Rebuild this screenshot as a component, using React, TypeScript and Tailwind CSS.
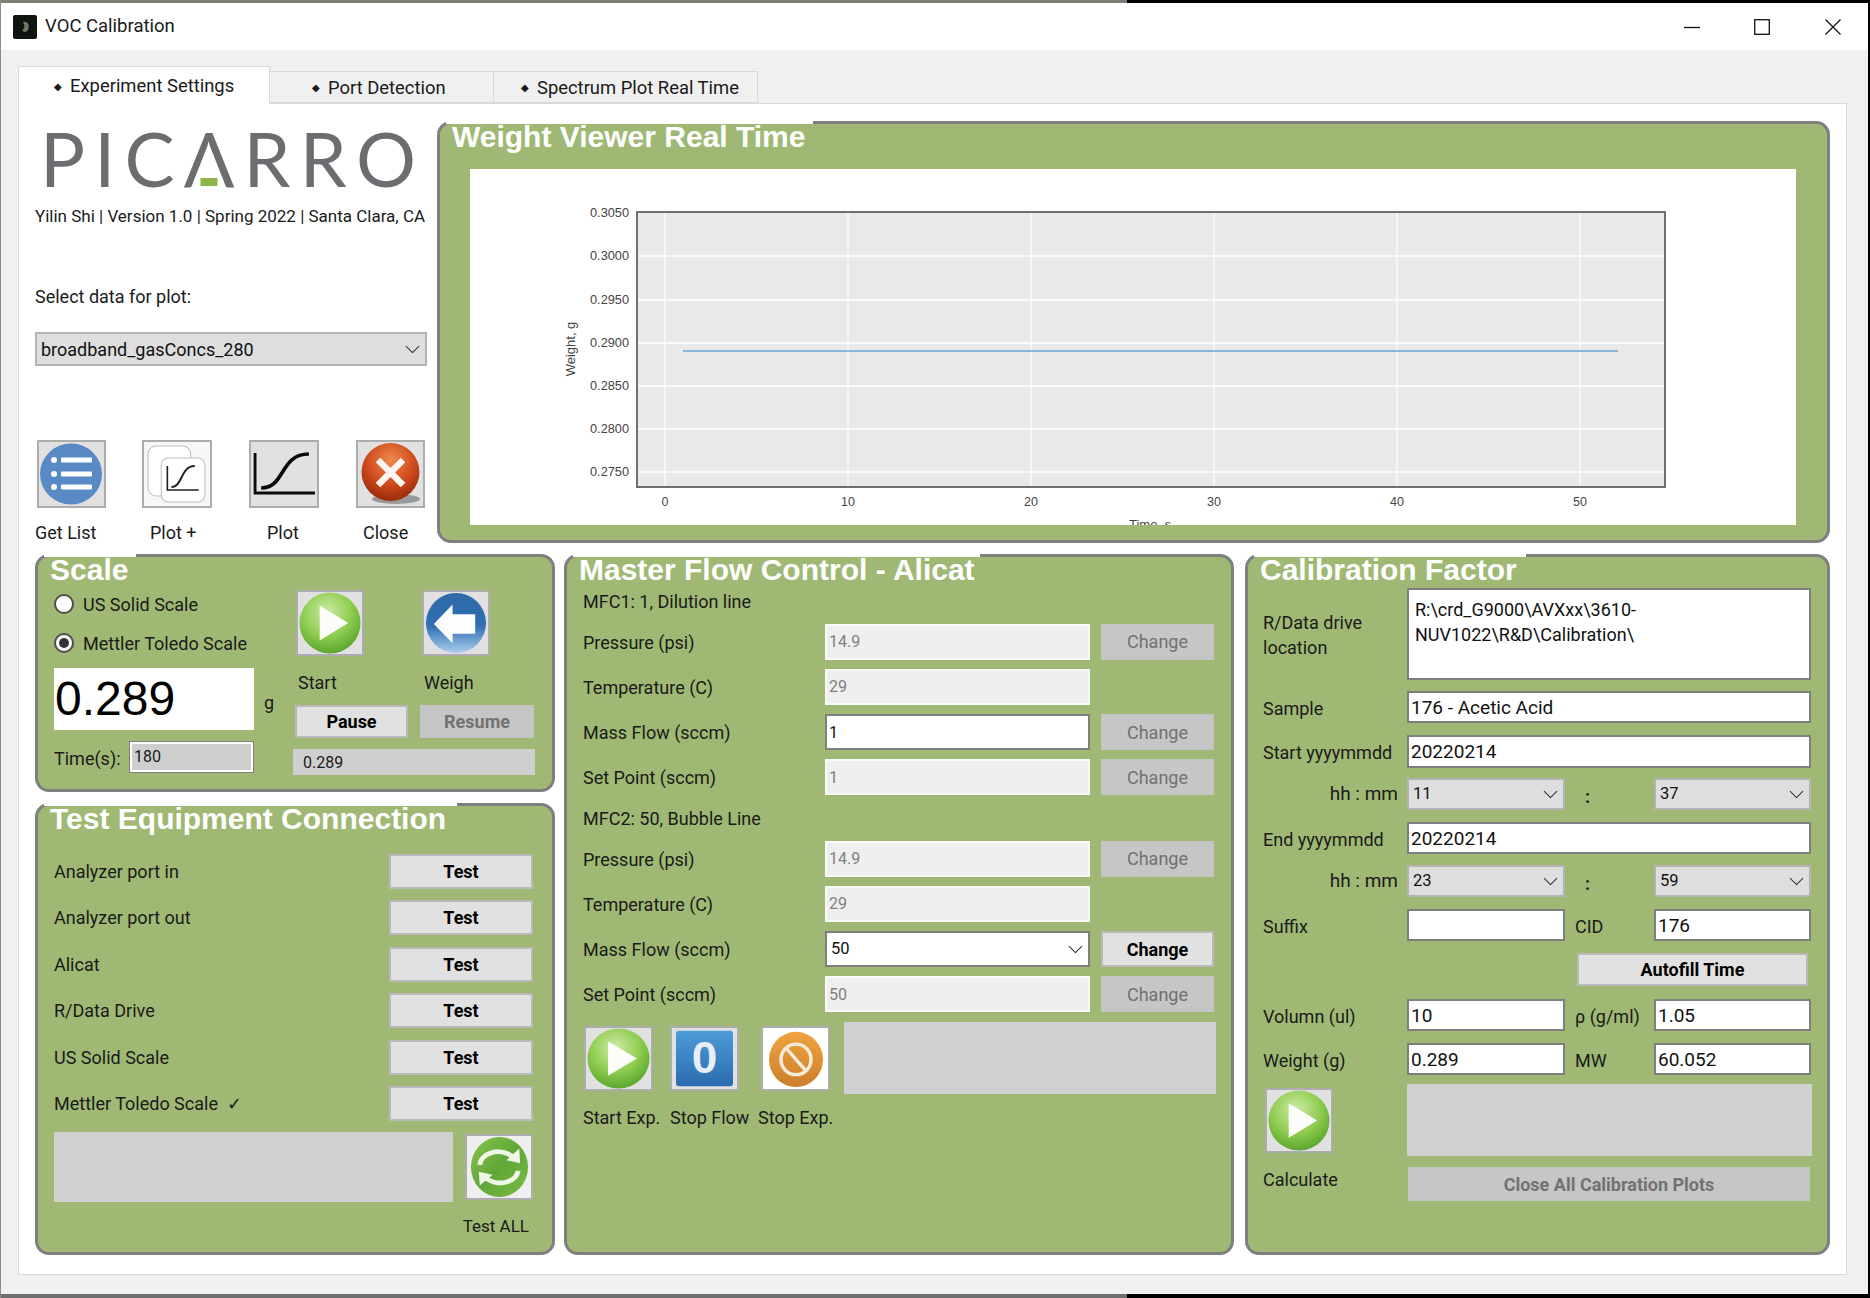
import React from "react";
import { ChevronDown } from "lucide-react";

const GroupBox = ({ title, titleW, className, children }: { title: string; titleW: string; className: string; children: React.ReactNode }) => (
  <section className={`relative rounded-[14px] border-[3px] border-[#7f7f7f] bg-[#9fb974] ${className}`}>
    <div className={`absolute -top-[3px] left-[6px] h-[3px] bg-white ${titleW}`} />
    <h2 className="absolute -top-[5px] left-[12px] whitespace-nowrap font-['Liberation_Sans'] text-[30px] font-bold leading-[36px] text-white">{title}</h2>
    {children}
  </section>
);

const IconBtn = ({ children, className = "bg-[#e1e1e1]" }: { children: React.ReactNode; className?: string }) => (
  <button className={`block h-full w-full border-2 border-[#adadad] p-0 ${className}`}>{children}</button>
);

const Svg = ({ children }: { children: React.ReactNode }) => (
  <svg viewBox="0 0 65 64" preserveAspectRatio="none" className="block h-full w-full">{children}</svg>
);

const PlayIcon = () => (
  <Svg>
    <defs>
      <radialGradient id="gp" cx="45%" cy="32%" r="72%">
        <stop offset="0%" stopColor="#cdeaa6" />
        <stop offset="55%" stopColor="#8fcd50" />
        <stop offset="100%" stopColor="#55a12a" />
      </radialGradient>
    </defs>
    <ellipse cx="32.5" cy="32" rx="31" ry="31.5" fill="url(#gp)" />
    <path d="M22 14 L51 32 L22 50 Z" fill="#fcfdf9" />
  </Svg>
);

const ListIcon = () => (
  <Svg>
    <ellipse cx="32" cy="32" rx="31" ry="30.5" fill="#5a8ac6" />
    {[18, 32, 45].map((y) => (
      <g key={y} fill="#fff">
        <circle cx="15" cy={y} r="3" />
        <rect x="22" y={y - 2.5} width="31" height="5" rx="1" />
      </g>
    ))}
  </Svg>
);

const PlotPlusIcon = () => (
  <Svg>
    <rect x="4" y="4" width="42" height="50" rx="8" fill="#fff" stroke="#bdbdbd" />
    <rect x="17" y="16" width="43" height="44" rx="7" fill="#fff" stroke="#bdbdbd" />
    <path d="M23 24 V48 H54" fill="none" stroke="#222" strokeWidth="1.6" />
    <path d="M27 45 C38 45 36 24 50 24" fill="none" stroke="#222" strokeWidth="2" />
  </Svg>
);

const PlotIcon = () => (
  <Svg>
    <path d="M4 11 V51 H63" fill="none" stroke="#0a0a0a" strokeWidth="2.8" />
    <path d="M10 46 C34 46 28 12 57 12" fill="none" stroke="#0a0a0a" strokeWidth="3.6" />
  </Svg>
);

const CloseIcon = () => (
  <Svg>
    <defs>
      <radialGradient id="rd" cx="50%" cy="30%" r="75%">
        <stop offset="0%" stopColor="#ee8a4c" />
        <stop offset="55%" stopColor="#cf4a1c" />
        <stop offset="100%" stopColor="#8f2508" />
      </radialGradient>
    </defs>
    <ellipse cx="38" cy="57" rx="24" ry="5" fill="#9a9a9a" />
    <ellipse cx="32.5" cy="30" rx="29" ry="29" fill="url(#rd)" />
    <path d="M20 18 L45 43 M45 18 L20 43" stroke="#fdf6f0" strokeWidth="6.5" />
  </Svg>
);

const ArrowIcon = () => (
  <Svg>
    <defs>
      <linearGradient id="bl" x1="0" y1="0" x2="0" y2="1">
        <stop offset="0%" stopColor="#2f69a8" />
        <stop offset="55%" stopColor="#2f6fb2" />
        <stop offset="100%" stopColor="#a9cdee" />
      </linearGradient>
    </defs>
    <ellipse cx="32.5" cy="32" rx="30.5" ry="31" fill="url(#bl)" />
    <path d="M10 33 L29 13 V23 H52 V43 H29 V53 Z" fill="#fdfdfd" />
  </Svg>
);

const RefreshIcon = () => (
  <Svg>
    <defs>
      <linearGradient id="rf" x1="0" y1="0" x2="1" y2="1">
        <stop offset="0%" stopColor="#8bc34f" />
        <stop offset="50%" stopColor="#5fa738" />
        <stop offset="100%" stopColor="#7cbc45" />
      </linearGradient>
    </defs>
    <ellipse cx="33" cy="32" rx="29" ry="31" fill="url(#rf)" />
    <path d="M13 30 C14 18 32 11 46 21" fill="none" stroke="#eef6e6" strokeWidth="5" />
    <path d="M53 13 L54 28 L40 25 Z" fill="#eef6e6" />
    <path d="M52 36 C50 47 33 53 20 44" fill="none" stroke="#eef6e6" strokeWidth="5" />
    <path d="M13 51 L12 37 L26 40 Z" fill="#eef6e6" />
  </Svg>
);

const ZeroIcon = () => (
  <Svg>
    <defs>
      <linearGradient id="bz" x1="0" y1="0" x2="0" y2="1">
        <stop offset="0%" stopColor="#4d9bd6" />
        <stop offset="100%" stopColor="#2a6cb0" />
      </linearGradient>
    </defs>
    <rect x="4" y="3" width="57" height="58" rx="3" fill="url(#bz)" />
    <text x="32.5" y="47" textAnchor="middle" fontFamily="Liberation Sans" fontWeight="700" fontSize="46" fill="#e9eef5">0</text>
  </Svg>
);

const BanIcon = () => (
  <Svg>
    <defs>
      <linearGradient id="or" x1="0" y1="0" x2="0" y2="1">
        <stop offset="0%" stopColor="#efa33f" />
        <stop offset="100%" stopColor="#cc7f2c" />
      </linearGradient>
    </defs>
    <ellipse cx="33" cy="33" rx="27" ry="29" fill="url(#or)" />
    <ellipse cx="33" cy="33" rx="15" ry="16" fill="none" stroke="#f6ead9" strokeWidth="3.5" />
    <path d="M23 21 L43 45" stroke="#f6ead9" strokeWidth="3.5" />
  </Svg>
);

const Input = ({ value = "", big = false, disabled = false }: { value?: string; big?: boolean; disabled?: boolean }) => (
  <input
    readOnly
    value={value}
    className={`h-full w-full min-w-0 border-2 px-[2px] outline-none ${big ? "text-[19px]" : "text-[16px]"} ${disabled ? "border-[#f9f9f9] bg-[#efefef] text-[#808080] outline outline-1 outline-[#cfcfcf]" : "border-[#7f7f7f] bg-white text-[#111]"}`}
  />
);

const Select = ({ value, big = false, light = false }: { value: string; big?: boolean; light?: boolean }) => (
  <div className={`flex h-full items-center justify-between border-2 pl-[4px] pr-0 ${big ? "text-[18px]" : "text-[16.5px]"} text-[#111] ${light ? "border-[#7f7f7f] bg-white" : "border-[#b4b4b4] bg-[#dedede]"}`}>
    <span>{value}</span>
    <ChevronDown size={25} strokeWidth={1} className="text-[#333]" />
  </div>
);

const Btn = ({ children, disabled = false, strong = false, className = "" }: { children: React.ReactNode; disabled?: boolean; strong?: boolean; className?: string }) => (
  <button className={`flex items-center justify-center border-2 text-[18px] ${strong || !disabled ? "font-bold" : "font-normal"} ${disabled ? "border-[#c4c4c4] bg-[#c6c6c6] text-[#727272]" : "border-[#b9b9b9] bg-[#e1e1e1] text-black"} ${className}`}>{children}</button>
);

const Radio = ({ label, checked = false }: { label: string; checked?: boolean }) => (
  <label className="flex h-[39px] items-center gap-[9px]">
    <span className="flex h-[20px] w-[20px] items-center justify-center rounded-full border-2 border-[#4d4d4d] bg-white">
      {checked && <span className="h-[10px] w-[10px] rounded-full bg-[#333]" />}
    </span>
    <span className="pt-[2px]">{label}</span>
  </label>
);

const FlowRow = ({ label, value, disabled = true, change, changeOn = false, select = false }: { label: string; value: string; disabled?: boolean; change?: boolean; changeOn?: boolean; select?: boolean }) => (
  <div className="flex h-[45.25px] items-center">
    <span className="w-[242px] pt-[1px]">{label}</span>
    <div className="h-[36px] w-[265px]">
      {select ? <Select value={value} light /> : <Input value={value} disabled={disabled} />}
    </div>
    {change && <Btn disabled={!changeOn} className="ml-[11px] h-[36px] w-[113px]">Change</Btn>}
  </div>
);

const CalRow = ({ label, className, children }: { label: string; className: string; children: React.ReactNode }) => (
  <div className={`flex items-center ${className}`}>
    <span className="w-[144px] whitespace-nowrap pt-[2px]">{label}</span>
    <div className="h-full w-[404px]">{children}</div>
  </div>
);

const CalPair = ({ label, second, left, right, className, indent = false }: { label: string; second: string; left: React.ReactNode; right: React.ReactNode; className: string; indent?: boolean }) => (
  <div className={`flex items-center ${className}`}>
    <span className={`w-[144px] whitespace-nowrap ${indent ? "pr-[9px] text-right text-[19px]" : "pt-[2px]"}`}>{label}</span>
    <div className="h-full w-[158px]">{left}</div>
    <span className={`w-[89px] whitespace-nowrap ${indent ? "pl-[20px] pt-[4px] font-bold" : "pl-[10px] pt-[2px]"}`}>{second}</span>
    <div className="h-full w-[157px]">{right}</div>
  </div>
);

const Chart = () => {
  const ys = [
    ["0.3050", 214],
    ["0.3000", 257],
    ["0.2950", 301],
    ["0.2900", 344],
    ["0.2850", 387],
    ["0.2800", 430],
    ["0.2750", 473],
  ] as const;
  const xs = [
    ["0", 665],
    ["10", 848],
    ["20", 1031],
    ["30", 1214],
    ["40", 1397],
    ["50", 1580],
  ] as const;
  return (
    <svg viewBox="470 170 1326 356" className="block h-[356px] w-[1326px] bg-white" fontFamily="Liberation Sans" fontSize="12.5" fill="#444">
      <rect x="637" y="213" width="1028" height="275" fill="#e9e9e9" stroke="#6f6f6f" strokeWidth="2" />
      {ys.slice(1).map(([, y]) => <line key={y} x1="638" x2="1664" y1={y} y2={y} stroke="#fff" strokeWidth="1.5" />)}
      {xs.map(([, x]) => <line key={x} x1={x} x2={x} y1="214" y2="487" stroke="#fff" strokeWidth="1.2" />)}
      {ys.map(([t, y]) => <text key={t} x="629" y={y + 4} textAnchor="end" textLength="39" lengthAdjust="spacingAndGlyphs">{t}</text>)}
      {xs.map(([t, x]) => <text key={t} x={x} y="507" textAnchor="middle">{t}</text>)}
      <line x1="683" x2="1618" y1="352" y2="352" stroke="#6ba3d0" strokeWidth="1.6" />
      <text transform="translate(575 350) rotate(-90)" textAnchor="middle" fontSize="13">Weight, g</text>
      <text x="1129" y="530" fontSize="13">Time, s</text>
    </svg>
  );
};

export default function App() {
  return (
    <div className="relative h-[1298px] w-[1870px] overflow-hidden bg-black font-['Roboto',sans-serif] text-[18px] text-[#1a1a1a]">
      <div className="h-[3px] w-[1127px] bg-[#7d7d72]" />
      <div className="absolute bottom-0 left-0 h-[4px] w-[1127px] bg-[#6f6f6f]" />
      <div className="absolute left-0 top-0 h-full w-[1px] bg-[#8b8b8b]" />
      <main className="ml-[1px] flex h-[1291px] w-[1867px] flex-col bg-[#f0f0f0]">
        <header className="flex h-[47px] shrink-0 items-center bg-white pl-[12px]">
          <svg viewBox="0 0 24 24" className="h-[24px] w-[24px]">
            <rect width="24" height="24" rx="2" fill="#101410" />
            <path d="M10 7 C15 6 17 10 15 15 C13 18 10 17 9 15 C12 14 12 10 10 7Z" fill="#6d7a63" />
          </svg>
          <span className="ml-[8px] text-[18.5px]">VOC Calibration</span>
          <div className="ml-auto flex items-center pr-[27px]">
            <svg width="16" height="16" viewBox="0 0 16 16" className="mr-[54px]"><path d="M0 8.5H16" stroke="#111" strokeWidth="1.3" /></svg>
            <svg width="16" height="16" viewBox="0 0 16 16" className="mr-[55px]"><rect x="0.7" y="0.7" width="14.6" height="14.6" fill="none" stroke="#111" strokeWidth="1.3" /></svg>
            <svg width="16" height="16" viewBox="0 0 16 16"><path d="M0.5 0.5L15.5 15.5M15.5 0.5L0.5 15.5" stroke="#111" strokeWidth="1.3" /></svg>
          </div>
        </header>

        <nav className="flex h-[53px] shrink-0 items-end pl-[17px] text-[18.4px]">
          <div className="relative z-10 -mb-[1px] flex h-[38px] w-[252px] items-center gap-[8px] border border-b-0 border-[#d9d9d9] bg-white pl-[35px] pt-[1px]"><span className="text-[10px]">◆</span>Experiment Settings</div>
          <div className="flex h-[32px] w-[224px] items-center gap-[8px] border border-l-0 border-[#d9d9d9] bg-[#f0f0f0] pl-[42px] pt-[1px]"><span className="text-[10px]">◆</span>Port Detection</div>
          <div className="flex h-[32px] w-[264px] items-center gap-[8px] border border-l-0 border-[#d9d9d9] bg-[#f0f0f0] pl-[27px] pt-[1px]"><span className="text-[10px]">◆</span>Spectrum Plot Real Time</div>
        </nav>

        <div className="ml-[17px] h-[1172px] w-[1829px] border border-[#d9d9d9] bg-white pl-[16px] pt-[17px]">
          <div className="flex h-[422px]">
            <div className="w-[402px]">
              <div className="ml-[5px] mt-[9px] flex h-[56px] w-[376px] justify-between font-['Lato'] text-[75px] font-normal leading-[56px] text-[#6b6d70]">
                <span>P</span><span>I</span><span>C</span>
                <span className="relative">
                  Λ
                  <span className="absolute bottom-0 left-1/2 h-[8px] w-[17px] -translate-x-1/2 bg-[#8db548]" />
                </span>
                <span>R</span><span>R</span><span>O</span>
              </div>
              <p className="mt-[18px] h-[24px] whitespace-nowrap text-[17px] leading-[24px]">Yilin Shi | Version 1.0 | Spring 2022 | Santa Clara, CA</p>
              <p className="mt-[57px] h-[24px] leading-[24px]">Select data for plot:</p>
              <div className="mt-[23px] h-[34px] w-[392px]"><Select value="broadband_gasConcs_280" big /></div>
              <div className="ml-[2px] mt-[74px] flex">
                <div className="w-[69px]"><div className="h-[68px]"><IconBtn><ListIcon /></IconBtn></div><p className="-ml-[2px] mt-[13px] whitespace-nowrap leading-[24px]">Get List</p></div>
                <div className="ml-[36px] w-[70px]"><div className="h-[68px]"><IconBtn className="bg-[#f7f7f7]"><PlotPlusIcon /></IconBtn></div><p className="ml-[8px] mt-[13px] whitespace-nowrap leading-[24px]">Plot +</p></div>
                <div className="ml-[37px] w-[70px]"><div className="h-[68px]"><IconBtn><PlotIcon /></IconBtn></div><p className="ml-[18px] mt-[13px] whitespace-nowrap leading-[24px]">Plot</p></div>
                <div className="ml-[37px] w-[69px]"><div className="h-[68px]"><IconBtn><CloseIcon /></IconBtn></div><p className="ml-[7px] mt-[13px] whitespace-nowrap leading-[24px]">Close</p></div>
              </div>
            </div>
            <GroupBox title="Weight Viewer Real Time" titleW="w-[367px]" className="h-[422px] w-[1393px] pl-[30px] pt-[45px]">
              <Chart />
            </GroupBox>
          </div>

          <div className="mt-[11px] flex h-[701px]">
            <div className="w-[520px]">
              <GroupBox title="Scale" titleW="w-[92px]" className="flex h-[238px] pl-[16px]">
                <div className="w-[239px] pt-[27px]">
                  <Radio label="US Solid Scale" />
                  <Radio label="Mettler Toledo Scale" checked />
                  <div className="mt-[6px] flex h-[62px] items-center">
                    <div className="flex h-full w-[200px] items-center bg-white pl-[1px] font-['Liberation_Sans'] text-[48px] leading-none text-black">0.289</div>
                    <span className="ml-[10px] mt-[6px]">g</span>
                  </div>
                  <div className="mt-[11px] flex h-[32px] items-center">
                    <span className="w-[75px] pt-[2px]">Time(s):</span>
                    <div className="h-full w-[125px] border border-[#7f7f7f]"><div className="flex h-full items-center border-2 border-white bg-[#cfcfcf] pl-[2px] text-[16px]">180</div></div>
                  </div>
                </div>
                <div className="w-[242px] pt-[33px]">
                  <div className="ml-[3px] flex h-[66px] gap-[58px]">
                    <div className="w-[68px]"><IconBtn><PlayIcon /></IconBtn></div>
                    <div className="w-[68px]"><IconBtn><ArrowIcon /></IconBtn></div>
                  </div>
                  <div className="ml-[5px] mt-[14px] flex h-[24px] items-center">
                    <span className="w-[126px]">Start</span>
                    <span>Weigh</span>
                  </div>
                  <div className="ml-[2px] mt-[11px] flex h-[33px] gap-[12px]">
                    <Btn className="w-[113px]">Pause</Btn>
                    <Btn disabled strong className="w-[114px]">Resume</Btn>
                  </div>
                  <div className="mt-[11px] flex h-[26px] items-center bg-[#cfcfcf] pl-[10px] pt-[1px] text-[16px]">0.289</div>
                </div>
              </GroupBox>
              <GroupBox title="Test Equipment Connection" titleW="w-[413px]" className="mt-[11px] h-[452px] pl-[16px] pr-[19px] pt-[42px]">
                {["Analyzer port in", "Analyzer port out", "Alicat", "R/Data Drive", "US Solid Scale", "Mettler Toledo Scale  ✓"].map((t) => (
                  <div key={t} className="flex h-[46.5px] items-center justify-between">
                    <span className="whitespace-pre">{t}</span>
                    <Btn className="h-[35px] w-[144px]">Test</Btn>
                  </div>
                ))}
                <div className="mt-[5px] flex justify-between">
                  <div className="h-[70px] w-[399px] bg-[#d0d0d0]" />
                  <div className="mt-[2px] h-[66px] w-[68px]"><IconBtn className="bg-[#efefef]"><RefreshIcon /></IconBtn></div>
                </div>
                <p className="mt-[12px] pr-[4px] text-right text-[17px] leading-[24px]">Test ALL</p>
              </GroupBox>
            </div>

            <GroupBox title="Master Flow Control - Alicat" titleW="w-[407px]" className="ml-[9px] h-[701px] w-[670px] pl-[16px] pt-[27px]">
              <p className="flex h-[35px] items-center">MFC1: 1, Dilution line</p>
              <FlowRow label="Pressure (psi)" value="14.9" change />
              <FlowRow label="Temperature (C)" value="29" />
              <FlowRow label="Mass Flow (sccm)" value="1" disabled={false} change />
              <FlowRow label="Set Point (sccm)" value="1" change />
              <p className="flex h-[36px] items-center pt-[1px]">MFC2: 50, Bubble Line</p>
              <FlowRow label="Pressure (psi)" value="14.9" change />
              <FlowRow label="Temperature (C)" value="29" />
              <FlowRow label="Mass Flow (sccm)" value="50" select change changeOn />
              <FlowRow label="Set Point (sccm)" value="50" change />
              <div className="mt-[5px] flex h-[72px]">
                <div className="ml-[1px] mt-[4px] h-[65px] w-[69px]"><IconBtn><PlayIcon /></IconBtn></div>
                <div className="ml-[17px] mt-[4px] h-[65px] w-[69px]"><IconBtn><ZeroIcon /></IconBtn></div>
                <div className="ml-[22px] mt-[4px] h-[65px] w-[69px]"><IconBtn className="bg-white"><BanIcon /></IconBtn></div>
                <div className="ml-[14px] h-[72px] w-[372px] bg-[#d0d0d0]" />
              </div>
              <div className="mt-[11px] flex h-[24px] items-center whitespace-nowrap">
                <span className="w-[87px]">Start Exp.</span>
                <span className="w-[88px]">Stop Flow</span>
                <span>Stop Exp.</span>
              </div>
            </GroupBox>

            <GroupBox title="Calibration Factor" titleW="w-[272px]" className="ml-[11px] h-[701px] w-[585px] pl-[15px] pt-[31px]">
              <div className="flex h-[92px] items-center">
                <span className="w-[144px] pt-[2px] leading-[25px]">R/Data drive<br />location</span>
                <div className="h-full w-[404px] whitespace-pre-line border-2 border-[#7f7f7f] bg-white pl-[6px] pt-[7px] leading-[25px] text-[#111]">{"R:\\crd_G9000\\AVXxx\\3610-\nNUV1022\\R&D\\Calibration\\"}</div>
              </div>
              <CalRow label="Sample" className="mt-[11px] h-[32px]"><Input value="176 - Acetic Acid" big /></CalRow>
              <CalRow label="Start yyyymmdd" className="mt-[12px] h-[33px]"><Input value="20220214" big /></CalRow>
              <CalPair label="hh : mm" second=":" indent className="mt-[10px] h-[32px]" left={<Select value="11" />} right={<Select value="37" />} />
              <CalRow label="End yyyymmdd" className="mt-[12px] h-[32px]"><Input value="20220214" big /></CalRow>
              <CalPair label="hh : mm" second=":" indent className="mt-[11px] h-[32px]" left={<Select value="23" />} right={<Select value="59" />} />
              <CalPair label="Suffix" second="CID" className="mt-[12px] h-[32px]" left={<Input big />} right={<Input value="176" big />} />
              <div className="mt-[12px] flex h-[33px] justify-end pr-[19px]"><Btn className="w-[231px]">Autofill Time</Btn></div>
              <CalPair label="Volumn (ul)" second="ρ (g/ml)" className="mt-[13px] h-[32px]" left={<Input value="10" big />} right={<Input value="1.05" big />} />
              <CalPair label="Weight (g)" second="MW" className="mt-[12px] h-[32px]" left={<Input value="0.289" big />} right={<Input value="60.052" big />} />
              <div className="mt-[9px] flex h-[72px]">
                <div className="ml-[2px] mt-[4px] h-[65px] w-[68px]"><IconBtn><PlayIcon /></IconBtn></div>
                <div className="ml-[74px] h-[72px] w-[405px] bg-[#d0d0d0]" />
              </div>
              <div className="mt-[11px] flex h-[34px]">
                <span className="w-[145px] pt-[1px] leading-[24px]">Calculate</span>
                <Btn disabled strong className="w-[402px]">Close All Calibration Plots</Btn>
              </div>
            </GroupBox>
          </div>
        </div>
      </main>
    </div>
  );
}
